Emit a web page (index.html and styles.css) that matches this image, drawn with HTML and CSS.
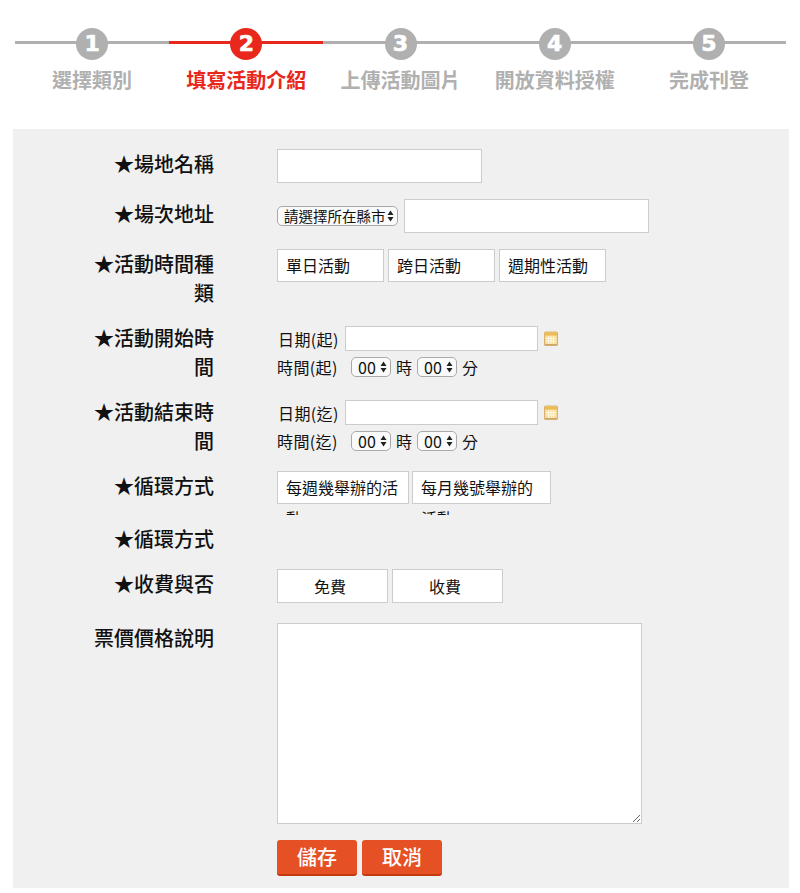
FILE: index.html
```html
<!DOCTYPE html>
<html lang="zh-Hant">
<head>
    <meta charset="UTF-8">
    <meta name="viewport" content="width=device-width, initial-scale=1.0">
    <title>填寫活動介紹</title>
    <link rel="stylesheet" href="styles.css">
</head>
<body>
    <div class="steps">
        <div class="step"><span class="step-num">1</span><span class="step-name">選擇類別</span></div>
        <div class="step active"><span class="step-num">2</span><span class="step-name">填寫活動介紹</span></div>
        <div class="step"><span class="step-num">3</span><span class="step-name">上傳活動圖片</span></div>
        <div class="step"><span class="step-num">4</span><span class="step-name">開放資料授權</span></div>
        <div class="step"><span class="step-num">5</span><span class="step-name">完成刊登</span></div>
    </div>

    <form class="panel">
        <div class="row row-single">
            <div class="label">★場地名稱</div>
            <div class="field"><input class="text name-input" type="text"></div>
        </div>
        <div class="row row-single">
            <div class="label">★場次地址</div>
            <div class="field line-field">
                <select class="pick city-pick"><option>請選擇所在縣市</option></select>
                <input class="text address-input" type="text">
            </div>
        </div>
        <div class="row row-double">
            <div class="label">★活動時間種類</div>
            <div class="field choices">
                <span class="choice time-choice">單日活動</span>
                <span class="choice time-choice">跨日活動</span>
                <span class="choice time-choice">週期性活動</span>
            </div>
        </div>
        <div class="row row-double">
            <div class="label">★活動開始時間</div>
            <div class="field">
                <div class="date-line">
                    <span class="date-label">日期(起)</span>
                    <input class="text date-input" type="text">
                    <svg class="calendar" width="14" height="15" viewBox="0 0 14 15">
                        <rect x="0.5" y="1" width="13" height="13.5" rx="1" fill="#f6dc97" stroke="#d8b26c"/>
                        <rect x="1" y="1.5" width="12" height="3" fill="#ecbb55"/>
                        <path d="M4.5 5v8M7 5v8M9.5 5v8M2 7.5h10M2 10h10" stroke="#fff8e4" stroke-width="1"/>
                        <rect x="0.5" y="13" width="13" height="1.5" fill="#cfa86a"/>
                    </svg>
                </div>
                <div class="time-line">
                    <span class="date-label">時間(起)</span>
                    <select class="pick time-pick hour"><option>00</option></select>
                    <span>時</span>
                    <select class="pick time-pick"><option>00</option></select>
                    <span>分</span>
                </div>
            </div>
        </div>
        <div class="row row-double">
            <div class="label">★活動結束時間</div>
            <div class="field">
                <div class="date-line">
                    <span class="date-label">日期(迄)</span>
                    <input class="text date-input" type="text">
                    <svg class="calendar" width="14" height="15" viewBox="0 0 14 15">
                        <rect x="0.5" y="1" width="13" height="13.5" rx="1" fill="#f6dc97" stroke="#d8b26c"/>
                        <rect x="1" y="1.5" width="12" height="3" fill="#ecbb55"/>
                        <path d="M4.5 5v8M7 5v8M9.5 5v8M2 7.5h10M2 10h10" stroke="#fff8e4" stroke-width="1"/>
                        <rect x="0.5" y="13" width="13" height="1.5" fill="#cfa86a"/>
                    </svg>
                </div>
                <div class="time-line">
                    <span class="date-label">時間(迄)</span>
                    <select class="pick time-pick hour"><option>00</option></select>
                    <span>時</span>
                    <select class="pick time-pick"><option>00</option></select>
                    <span>分</span>
                </div>
            </div>
        </div>
        <div class="row row-clip">
            <div class="label">★循環方式</div>
            <div class="field choices clipped">
                <span class="choice week-choice">每週幾舉辦的活動</span>
                <span class="choice month-choice">每月幾號舉辦的活動</span>
            </div>
        </div>
        <div class="row row-plain">
            <div class="label">★循環方式</div>
        </div>
        <div class="row row-fee">
            <div class="label">★收費與否</div>
            <div class="field choices">
                <span class="choice fee-choice">免費</span>
                <span class="choice fee-choice">收費</span>
            </div>
        </div>
        <div class="row row-note">
            <div class="label">票價價格說明</div>
            <div class="field"><textarea class="note"></textarea></div>
        </div>
        <div class="actions">
            <button class="btn" type="button">儲存</button>
            <button class="btn" type="button">取消</button>
        </div>
    </form>
</body>
</html>
```

FILE: styles.css
```css
body {
    margin: 0;
    background: #fff;
    color: #111;
    font-family: "Noto Sans CJK TC", "Liberation Sans", sans-serif;
}

.steps {
    display: flex;
    margin: 0 14px 0 15px;
    padding-top: 28px;
    height: 129px;
    box-sizing: border-box;
}

.step {
    flex: 1;
    display: flex;
    flex-direction: column;
    align-items: center;
    color: #b0b0b0;
    background: linear-gradient(#b0b0b0, #b0b0b0) no-repeat 0 13px / 100% 3px;
}

.step.active {
    color: #e8281c;
    background-image: linear-gradient(#e8281c, #e8281c);
}

.step-num {
    width: 32px;
    height: 32px;
    border-radius: 50%;
    background: #b0b0b0;
    color: #fff;
    display: flex;
    justify-content: center;
    align-items: center;
    font-family: "DejaVu Sans", sans-serif;
    font-size: 22px;
    font-weight: bold;
    line-height: 32px;
    -webkit-text-stroke: 0.6px #fff;
}

.active .step-num {
    background: #e8281c;
}

.step-name {
    margin-top: 6px;
    font-size: 20px;
    font-weight: bold;
    line-height: 28px;
    white-space: nowrap;
}

.panel {
    margin: 0 11px 0 13px;
    height: 759px;
    box-sizing: border-box;
    padding: 20px 0 0 76px;
    background: #f0f0f0;
}

.row {
    display: flex;
    gap: 63px;
}

.row-single { height: 50px; }
.row-double { height: 74px; }
.row-clip { height: 53px; }
.row-plain { height: 45px; }
.row-fee { height: 54px; }
.row-note { height: 217px; }

.label {
    flex: none;
    width: 125px;
    font-size: 20px;
    font-weight: 500;
    line-height: 29px;
    text-align: right;
}

.field {
    font-size: 16px;
}

.text {
    box-sizing: border-box;
    margin: 0;
    background: #fff;
    border: 1px solid #ccc;
    padding: 0 6px;
    display: block;
}

.name-input {
    width: 205px;
    height: 34px;
}

.line-field {
    display: flex;
    align-items: center;
    gap: 6px;
    height: 34px;
}

.address-input {
    width: 245px;
    height: 34px;
}

.pick {
    appearance: none;
    margin: 0;
    height: 20px;
    box-sizing: border-box;
    border: 1px solid #a9a9a9;
    border-radius: 5px;
    background: #fafafa url("data:image/svg+xml,%3Csvg xmlns='http://www.w3.org/2000/svg' width='7' height='12'%3E%3Cpath d='M3.5 0.5L6.5 5H0.5zM3.5 11.5L0.5 7H6.5z' fill='%23222'/%3E%3C/svg%3E") no-repeat right 3px center;
    color: #111;
    font-family: inherit;
    font-size: 14.5px;
    line-height: 18px;
}

.city-pick {
    width: 121px;
    padding: 0 0 0 6px;
}

.time-pick {
    width: 40px;
    padding: 0 0 0 6px;
    font-size: 16px;
}

.choices {
    display: flex;
    gap: 4px;
    align-items: flex-start;
}

.choice {
    box-sizing: border-box;
    height: 33px;
    padding: 0 8px;
    background: #fff;
    border: 1px solid #ccc;
    font-size: 16px;
    line-height: 31px;
}

.time-choice {
    width: 107px;
    line-height: 30px;
}

.week-choice { width: 132px; }
.month-choice { width: 139px; }

.fee-choice {
    width: 111px;
    height: 34px;
    padding-right: 13px;
    text-align: center;
    line-height: 32px;
}

.clipped {
    height: 44px;
    overflow: hidden;
    gap: 3px;
}

.date-line {
    display: flex;
    align-items: center;
    height: 25px;
    margin: 3px 0 0 1px;
}

.date-label {
    width: 62px;
    letter-spacing: 0.4px;
    white-space: nowrap;
}

.date-line .date-label {
    width: 67px;
}

.date-input {
    width: 193px;
    height: 25px;
}

.calendar {
    margin-left: 6px;
}

.time-line {
    display: flex;
    align-items: center;
    gap: 5px;
    margin-top: 6px;
    height: 20px;
}

.hour {
    margin-left: 7px;
}

.note {
    display: block;
    box-sizing: border-box;
    width: 365px;
    height: 201px;
    margin: 0;
    background: #fff;
    border: 1px solid #ccc;
}

.actions {
    display: flex;
    gap: 5px;
    margin-left: 188px;
}

.btn {
    width: 80px;
    height: 36px;
    padding: 0;
    background: #e55125;
    border: 0;
    border-bottom: 2px solid #c23a10;
    border-radius: 3px;
    color: #fff;
    font-family: inherit;
    font-size: 20px;
    font-weight: 500;
    line-height: 34px;
}
```
